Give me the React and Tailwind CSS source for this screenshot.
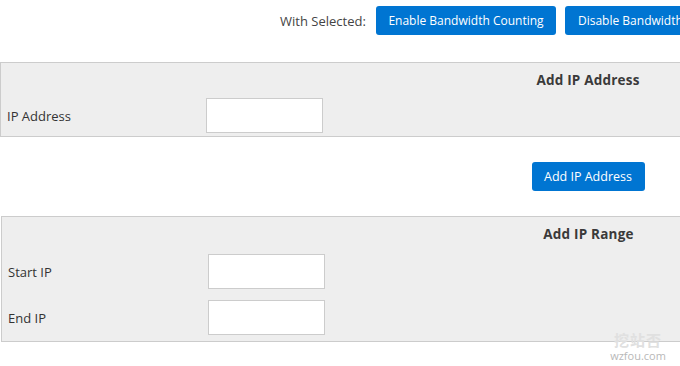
import React from 'react';

export default function App() {
  const font = { fontFamily: '"Open Sans", "Noto Sans", "Noto Sans CJK SC", sans-serif' };

  return (
    <div className="relative w-[680px] h-[366px] overflow-hidden bg-white text-[#333]" style={font}>
      <div className="w-[1176px]">
        {/* Mass actions */}
        <div className="flex items-center h-[41px] pl-[280px] text-[13px]">
          <span className="w-[96px] pt-[2px] text-[#444]">With Selected:</span>
          <button className="h-[29px] w-[180px] pt-[1px] bg-[#0075d2] text-white text-[12px] rounded-[3px]">
            Enable Bandwidth Counting
          </button>
          <button className="ml-[9px] h-[29px] w-[190px] pt-[1px] bg-[#0075d2] text-white text-[12px] rounded-[3px] text-left pl-[13px]">
            Disable Bandwidth Counting
          </button>
        </div>

        {/* Add IP Address */}
        <div className="mt-[21px] h-[75px] border border-[#cccccc] bg-[#eeeeee]">
          <div className="h-[31px] pt-[4px] flex items-center justify-center font-bold text-[13.5px] tracking-[0.2px] text-[#3a3a3a]">
            Add IP Address
          </div>
          <div className="h-[42px] flex items-center text-[13px]">
            <span className="w-[205px] pl-[6px] pt-[3px]">IP Address</span>
            <input className="h-[35px] w-[117px] bg-white border border-[#cccccc] outline-none" />
          </div>
        </div>

        <div className="flex justify-center mt-[25px]">
          <button className="h-[29px] w-[113px] pt-[2px] bg-[#0075d2] text-white text-[12.5px] rounded-[3px]">
            Add IP Address
          </button>
        </div>

        {/* Add IP Range */}
        <div className="mt-[25px] ml-px h-[126px] border border-[#cccccc] bg-[#eeeeee]">
          <div className="h-[31px] pt-[4px] flex items-center justify-center font-bold text-[13.5px] tracking-[0.2px] text-[#3a3a3a]">
            Add IP Range
          </div>
          <div className="h-[46px] flex items-center text-[13px]">
            <span className="w-[206px] pl-[6px] pt-[3px]">Start IP</span>
            <input className="h-[35px] w-[117px] bg-white border border-[#cccccc] outline-none" />
          </div>
          <div className="h-[46px] flex items-center text-[13px]">
            <span className="w-[206px] pl-[6px] pt-[3px]">End IP</span>
            <input className="h-[35px] w-[117px] bg-white border border-[#cccccc] outline-none" />
          </div>
        </div>
      </div>

      {/* watermark */}
      <div className="absolute left-[604px] top-[332px] w-[68px] flex flex-col items-center gap-[2px] pointer-events-none">
        <span className="text-[15px] leading-[16px] font-bold text-[#e0e0e0] tracking-[1px]">挖站否</span>
        <span className="text-[11px] leading-[12px] text-[#b8b8b8]">wzfou.com</span>
      </div>
    </div>
  );
}
